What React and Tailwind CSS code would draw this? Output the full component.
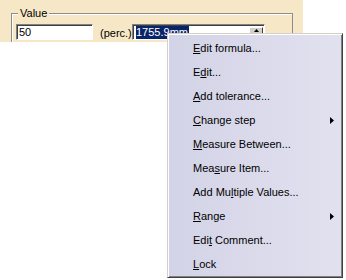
const items = [
  { pre: "", key: "E", post: "dit formula..." },
  { pre: "E", key: "d", post: "it..." },
  { pre: "", key: "A", post: "dd tolerance..." },
  { pre: "", key: "C", post: "hange step", sub: true },
  { pre: "", key: "M", post: "easure Between..." },
  { pre: "Mea", key: "s", post: "ure Item..." },
  { pre: "Add Mu", key: "l", post: "tiple Values..." },
  { pre: "", key: "R", post: "ange", sub: true },
  { pre: "Edi", key: "t", post: " Comment..." },
  { pre: "", key: "L", post: "ock" },
];

function SubArrow() {
  return (
    <svg width="4" height="7" viewBox="0 0 4 7" className="shrink-0">
      <path d="M0 0 L4 3.5 L0 7 Z" fill="#000" />
    </svg>
  );
}

export default function App() {
  return (
    <div className="relative w-[346px] h-[280px] bg-white overflow-hidden font-['Liberation_Sans',Arial,sans-serif] text-[11px] text-black">
      {/* beige dialog strip */}
      <div className="w-[303px] h-[42px] bg-[#f6e8c7] overflow-hidden pt-[13px] pl-[11px]">
        <div className="relative w-[282px] h-[40px] border-t border-l border-r border-[#8c8c8c] shadow-[inset_1px_1px_0_#fff] pt-[10px] pl-[4px]">
          <span className="absolute -top-[8px] left-[6px] px-[2px] bg-[#f6e8c7] leading-[14px]">Value</span>
          <div className="flex items-start">
            <div className="w-[77px] h-[16px] bg-white border border-t-[#808080] border-l-[#808080] border-b-white border-r-white shadow-[inset_1px_1px_0_#404040] pl-[2px] leading-[14px]">
              50
            </div>
            <span className="w-[39px] pl-[7px] pt-[2px] leading-[14px]">(perc.)</span>
            <div className="flex w-[133px] h-[16px] bg-white border border-t-[#808080] border-l-[#808080] border-b-white border-r-white shadow-[inset_1px_1px_0_#404040] pl-[3px] pt-[1px]">
              <span className="h-[13px] bg-[#0a246a] text-white leading-[13px] pr-[1px]">1755.9mm</span>
              <div className="ml-auto mr-[1px] mt-[1px] w-[14px] h-[7px] flex items-center justify-center bg-[#d4d0c8] border border-t-white border-l-white border-r-[#404040] border-b-[#808080]">
                <svg width="5" height="3" viewBox="0 0 5 3">
                  <path d="M0 3 L2.5 0 L5 3 Z" fill="#000" />
                </svg>
              </div>
            </div>
          </div>
        </div>
      </div>

      {/* context menu */}
      <div className="absolute left-[167px] top-[33px] w-[176px] h-[245px] border border-t-[#d4d0c8] border-l-[#d4d0c8] border-r-[#404040] border-b-[#404040] shadow-[inset_1px_1px_0_#fff,inset_-1px_-1px_0_#808080] bg-gradient-to-r from-[#d3d3e7] to-[#e1e1ef] pt-[2px]">
        {items.map((it, i) => (
          <div key={i} className="flex items-center h-[24px] pl-[25px] pr-[8px] whitespace-nowrap">
            <span className="flex-1">
              {it.pre}
              <u className="underline-offset-[1px]">{it.key}</u>
              {it.post}
            </span>
            {it.sub && <SubArrow />}
          </div>
        ))}
      </div>
    </div>
  );
}
